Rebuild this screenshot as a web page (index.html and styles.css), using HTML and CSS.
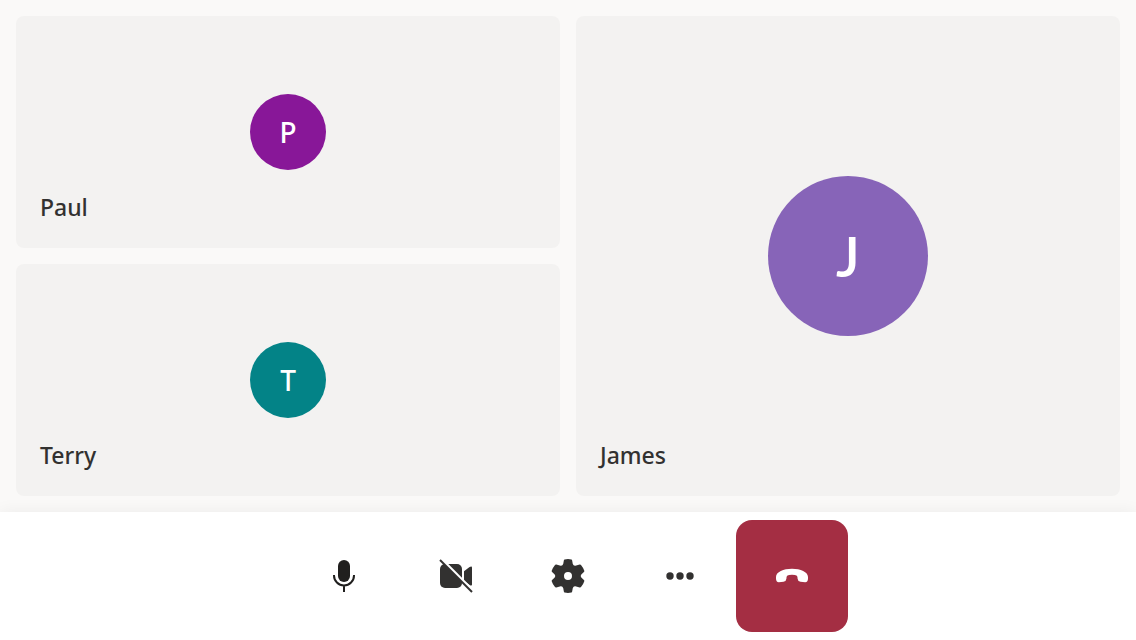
FILE: index.html
```html
<!DOCTYPE html>
<html lang="en">
<head>
<meta charset="utf-8">
<meta name="viewport" content="width=device-width, initial-scale=1">
<title>Call</title>
<link rel="stylesheet" href="styles.css">
</head>
<body class="call">
<main class="gallery">
  <section class="column">
    <article class="tile">
      <span class="avatar avatar-magenta">P</span>
      <h2 class="name">Paul</h2>
    </article>
    <article class="tile">
      <span class="avatar avatar-teal">T</span>
      <h2 class="name">Terry</h2>
    </article>
  </section>
  <article class="tile">
    <span class="avatar avatar-large avatar-violet">J</span>
    <h2 class="name">James</h2>
  </article>
</main>
<footer class="controls">
  <button class="control" type="button" aria-label="Mute">
    <svg class="icon" viewBox="0 0 36 36" aria-hidden="true">
      <rect x="12" y="2" width="12" height="22" rx="6" fill="#201f1e"/>
      <path d="M8 17v.5a10 10 0 0 0 20 0V17M18 27.5V34" fill="none" stroke="#201f1e" stroke-width="2"/>
    </svg>
  </button>
  <button class="control" type="button" aria-label="Turn camera on">
    <svg class="icon" viewBox="0 0 36 36" aria-hidden="true">
      <rect x="2" y="6" width="22" height="24" rx="5" fill="currentColor"/>
      <path d="M26 13.2l5.600-4.200q.8-.5 1.600-.5.8.1.8 1V26.500q0 .9-.8 1-.8 0-1.600-.5L26 22.800z" fill="currentColor"/>
      <path d="M3 .800l33 33" stroke="#fff" stroke-width="3"/>
      <path d="M2 2l32 32" stroke="currentColor" stroke-width="2"/>
    </svg>
  </button>
  <button class="control" type="button" aria-label="Settings">
    <svg class="icon" viewBox="0 0 36 36" aria-hidden="true">
      <path fill="currentColor" fill-rule="evenodd" d="M14.600 1.400Q18 .6 21.400 1.400 22 1.600 22.100 2.200L22.800 6Q23.400 8 25.300 7.800L29.700 6.500Q30.500 6.300 31 6.900 33.200 9.500 34.300 12.800 34.500 13.500 33.900 14L31.300 16.400Q30 18 31.300 19.600L33.900 22Q34.500 22.500 34.300 23.200 33.200 26.500 31 29.100 30.500 29.700 29.700 29.500L25.300 28.200Q23.400 28 22.800 30L22.100 33.800Q22 34.400 21.400 34.600 18 35.400 14.600 34.600 14 34.400 13.900 33.800L13.200 30Q12.600 28 10.700 28.200L6.300 29.500Q5.500 29.700 5 29.100 2.800 26.500 1.700 23.200 1.500 22.500 2.100 22L4.700 19.600Q6 18 4.700 16.400L2.100 14Q1.500 13.500 1.700 12.800 2.800 9.500 5 6.900 5.500 6.300 6.300 6.500L10.700 7.800Q12.600 8 13.200 6L13.900 2.200Q14 1.600 14.600 1.400ZM18 14a4 4 0 1 0 0 8 4 4 0 0 0 0-8Z"/>
    </svg>
  </button>
  <button class="control" type="button" aria-label="More options">
    <svg class="icon" viewBox="0 0 36 36" aria-hidden="true" fill="currentColor">
      <circle cx="8" cy="18" r="3.700"/><circle cx="18" cy="18" r="3.700"/><circle cx="28" cy="18" r="3.700"/>
    </svg>
  </button>
  <button class="control control-end" type="button" aria-label="Leave call">
    <svg class="icon" viewBox="0 0 36 36" aria-hidden="true">
      <path fill="currentColor" d="M18 10.800C26.500 10.800 34 14 34 19V20.500Q34 24.200 31.200 24.200L26.500 23.800Q23.800 23.500 23.600 20.800 23.600 18.600 22.900 17.800 21.500 16.700 18 16.700T13.100 17.800Q12.400 18.600 12.400 20.800 12.200 23.500 9.500 23.800L4.800 24.200Q2 24.200 2 20.500V19C2 14 9.500 10.800 18 10.800Z"/>
    </svg>
  </button>
</footer>
</body>
</html>
```
FILE: styles.css
```css
*, *::before, *::after { box-sizing: border-box; }

.call {
  margin: 0;
  min-height: 100vh;
  display: flex;
  flex-direction: column;
  background: #faf9f8;
  color: #323130;
  font-family: "Segoe UI", "Noto Sans", sans-serif;
}

.gallery {
  flex: 1;
  display: grid;
  grid-template-columns: 1fr 1fr;
  gap: 16px;
  padding: 16px;
}

.column {
  display: grid;
  grid-template-rows: 1fr 1fr;
  gap: 16px;
}

.tile {
  display: grid;
  grid-template-rows: 1fr;
  place-items: center;
  border-radius: 8px;
  background: #f3f2f1;
}

.tile > * { grid-area: 1 / 1; }

.avatar {
  display: flex;
  align-items: center;
  justify-content: center;
  width: 76px;
  height: 76px;
  border-radius: 50%;
  color: #fff;
  font-size: 28px;
  font-weight: 500;
  line-height: 1;
}

.avatar-large {
  width: 160px;
  height: 160px;
  font-family: "Segoe UI", Lato, sans-serif;
  font-size: 56px;
  font-weight: 600;
}

.avatar-magenta { background: #881798; }
.avatar-teal { background: #038387; }
.avatar-violet { background: #8764b8; }

.name {
  place-self: end start;
  margin: 0;
  padding: 24px;
  font-size: 23px;
  font-weight: 500;
  line-height: 34px;
}

.controls {
  display: flex;
  justify-content: center;
  padding: 8px;
  background: #fff;
  box-shadow: 0 0 16px rgba(0, 0, 0, 0.06);
}

.control {
  display: flex;
  align-items: center;
  justify-content: center;
  width: 112px;
  height: 112px;
  padding: 0;
  border: 0;
  border-radius: 16px;
  background: transparent;
  color: #323130;
  cursor: pointer;
}

.control-end {
  background: #a42e43;
  color: #fff;
}

.icon {
  width: 36px;
  height: 36px;
}
```
